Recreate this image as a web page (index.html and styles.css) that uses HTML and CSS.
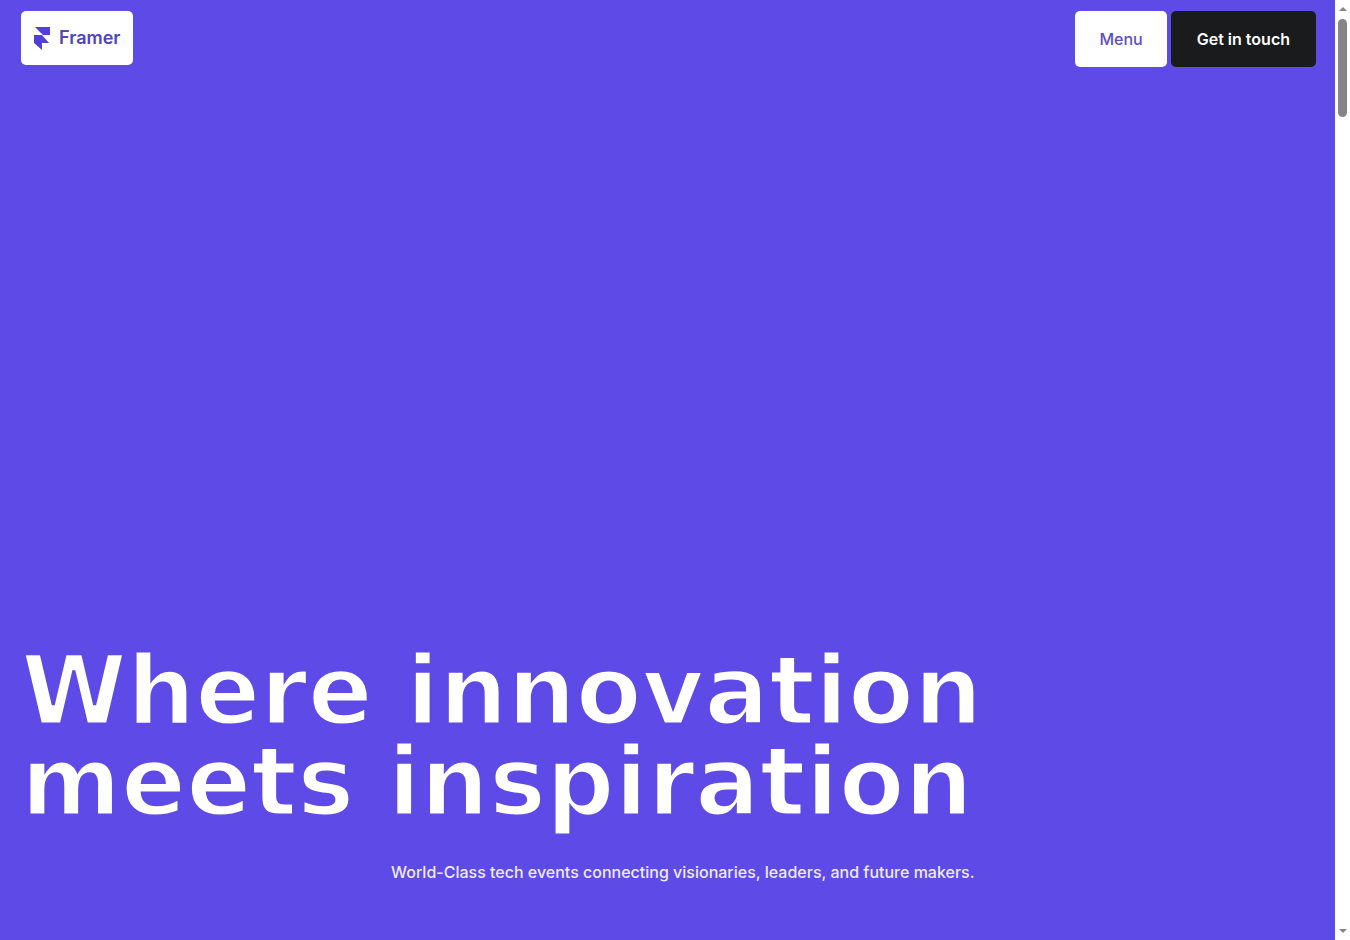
FILE: index.html
```html
<!DOCTYPE html>
<html lang="en">
<head>
<meta charset="UTF-8">
<meta name="viewport" content="width=device-width,initial-scale=1.0">
<title>Framer</title>
<link rel="stylesheet" href="styles.css">
</head>
<body>
<div class="page">
	<header class="header">
		<a class="logo" href="#">
			<svg class="logo-mark" viewBox="0 0 18 24" aria-hidden="true">
				<path d="M2 1H17V9H10ZM1 9H9L16 17H9V24L1 17Z"/>
			</svg>
			<span>Framer</span>
		</a>
		<nav class="nav">
			<button class="btn btn-menu" type="button">Menu</button>
			<a class="btn btn-contact" href="#contact">Get in touch</a>
		</nav>
	</header>
	<main class="hero">
		<h1>Where innovation<br>meets inspiration</h1>
		<p>World-Class tech events connecting visionaries, leaders, and future makers.</p>
	</main>
</div>
<div class="scrollbar" aria-hidden="true">
	<span class="arrow arrow-up"></span>
	<span class="thumb"></span>
	<span class="arrow arrow-down"></span>
</div>
</body>
</html>
```
FILE: styles.css
```css
*{box-sizing:border-box;}
body,h1,p{margin:0;padding:0;}
a{color:inherit;text-decoration:none;}

body{
	display: flex;
	min-height: 100vh;
	background: #5e4ae6;
	color: #fff;
	font: 500 16px/24px Inter,"Liberation Sans",sans-serif;
}
.page{
	flex: 1;
	display: flex;
	flex-direction: column;
	justify-content: space-between;
	padding: 11px 19px 56px 21px;
}

/* header */
.header{
	display: flex;
	justify-content: space-between;
	align-items: flex-start;
}
.logo{
	display: flex;
	align-items: center;
	gap: 8px;
	height: 54px;
	padding: 0 13px 0 12px;
	border-radius: 5px;
	background: #fff;
	color: #5144bd;
	font-size: 18px;
	font-weight: 600;
}
.logo-mark{
	width: 18px;
	height: 24px;
	fill: #5140d8;
}
.nav{
	display: flex;
	gap: 4px;
}
.btn{
	display: flex;
	align-items: center;
	justify-content: center;
	height: 56px;
	padding: 0 24px;
	border: 0;
	border-radius: 5px;
	font: inherit;
}
.btn-menu{
	background: #fff;
	color: #5d4cc4;
}
.btn-contact{
	padding: 0 26px;
	background: #1a1b1c;
	color: #fff;
	font-weight: 600;
}

/* hero */
.hero h1{
	font: 700 96px/91px "DejaVu Sans",sans-serif;
	/* background-coloured stroke thins the bold */
	-webkit-text-stroke: 3px #5e4ae6;
}
.hero p{
	margin: 32px 0 0 370px;
	color: #eeebff;
}

/* scrollbar */
.scrollbar{
	display: flex;
	flex-direction: column;
	align-items: center;
	width: 15px;
	padding: 7px 0;
	background: #fff;
}
.arrow{
	border: 4px solid transparent;
}
.arrow-up{
	border-top: 0;
	border-bottom-color: #858585;
}
.arrow-down{
	margin-top: auto;
	border-bottom: 0;
	border-top-color: #858585;
}
.thumb{
	width: 9px;
	height: 98px;
	margin-top: 8px;
	border-radius: 5px;
	background: #858585;
}
```
